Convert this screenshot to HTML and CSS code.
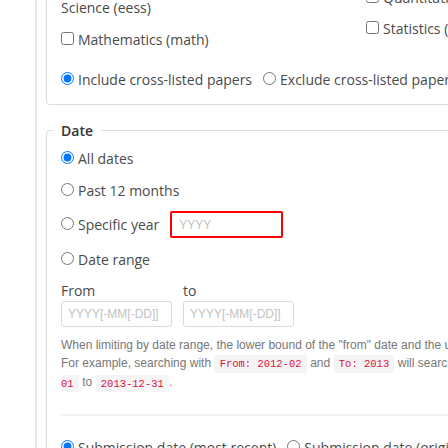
FILE: index.html
```html
<!DOCTYPE html>
<html lang="en">
<head>
<meta charset="utf-8">
<title>Advanced Search</title>
<link rel="stylesheet" href="styles.css">
</head>
<body>
<div class="page">
  <div class="panel">
    <fieldset class="box subject">
      <legend class="label">Subject</legend>
      <div class="subject-grid">
        <div class="col">
          <label class="check"><input type="checkbox">Computer Science (cs)</label>
          <label class="check"><input type="checkbox">Economics (econ)</label>
          <label class="check"><input type="checkbox">Electrical Engineering and Systems Science (eess)</label>
          <label class="check"><input type="checkbox">Mathematics (math)</label>
        </div>
        <div class="col">
          <div class="physics-row">
            <label class="check"><input type="checkbox">Physics</label>
            <select class="select"><option>all</option></select>
          </div>
          <label class="check"><input type="checkbox">Quantitative Biology (q-bio)</label>
          <label class="check"><input type="checkbox">Quantitative Finance (q-fin)</label>
          <label class="check"><input type="checkbox">Statistics (stat)</label>
        </div>
      </div>
      <div class="choice-row cross-row">
        <label class="choice"><input type="radio" name="cross" checked>Include cross-listed papers</label>
        <label class="choice"><input type="radio" name="cross">Exclude cross-listed papers</label>
      </div>
    </fieldset>

    <fieldset class="box date">
      <legend class="label">Date</legend>
      <div class="date-options">
        <label class="choice"><input type="radio" name="date" checked>All dates</label>
        <label class="choice"><input type="radio" name="date">Past 12 months</label>
        <div class="year-row">
          <label class="choice"><input type="radio" name="date">Specific year</label>
          <input class="input year" type="text" placeholder="YYYY">
        </div>
        <label class="choice"><input type="radio" name="date">Date range</label>
      </div>
      <div class="range">
        <div class="range-field">
          <label class="range-label">From</label>
          <input class="input range-input" type="text" placeholder="YYYY[-MM[-DD]]">
        </div>
        <div class="range-field">
          <label class="range-label">to</label>
          <input class="input range-input" type="text" placeholder="YYYY[-MM[-DD]]">
        </div>
      </div>
      <p class="help">When limiting by date range, the lower bound of the "from" date and the upper bound of the "to" date are used.<br>For example, searching with <code>From: 2012-02</code> and <code>To: 2013</code> will search for papers submitted from <code>2012-02-<br>01</code> to <code>2013-12-31</code>.</p>
      <hr class="divider">
      <div class="choice-row">
        <label class="choice"><input type="radio" name="datetype" checked>Submission date (most recent)</label>
        <label class="choice"><input type="radio" name="datetype">Submission date (original)</label>
        <label class="choice"><input type="radio" name="datetype">Announcement date</label>
      </div>
    </fieldset>
  </div>
</div>
</body>
</html>
```

FILE: styles.css
```css
html, body {
  margin: 0;
  padding: 0;
  overflow: hidden;
  background: #fff;
}

body {
  font-family: "Open Sans", "Noto Sans", sans-serif;
  font-size: 14px;
  font-weight: 400;
  line-height: 21px;
  color: #4a4a4a;
}

.page {
  width: 900px;
  margin-top: -114.6px;
}

.panel {
  margin-left: 35px;
  border-left: 2px solid #e8e8e8;
  padding: 0 20px 60px 9px;
}

.box {
  margin: 0;
  border: 1px solid #dbdbdb;
  border-radius: 4px;
  padding: 7px 14px 14px;
  min-width: 0;
}

.box + .box {
  margin-top: 15px;
}

.label {
  font-weight: 600;
  color: #363636;
  line-height: 21px;
  padding: 0 8px;
  margin-left: -8px;
}

.subject-grid {
  display: grid;
  grid-template-columns: 281px 1fr;
  column-gap: 24px;
}

.col {
  display: flex;
  flex-direction: column;
  gap: 10.5px;
}

.check,
.choice {
  display: block;
  white-space: normal;
}

input[type="checkbox"],
input[type="radio"] {
  width: 13px;
  height: 13px;
  margin: 0 4px 0 0;
  vertical-align: baseline;
}

.physics-row {
  display: flex;
  align-items: center;
  gap: 8px;
  height: 31.4px;
}

.select {
  height: 30px;
  font-family: inherit;
  font-size: 14px;
  border: 1px solid #dbdbdb;
  border-radius: 4px;
  background: #fff;
}

.choice-row {
  display: flex;
  gap: 11px;
  white-space: nowrap;
}

.choice-row .choice {
  white-space: nowrap;
}

.cross-row {
  margin-top: 19.2px;
}

.date-options {
  display: flex;
  flex-direction: column;
  gap: 10.5px;
}

.year-row {
  display: flex;
  align-items: center;
  gap: 11px;
}

.input {
  box-sizing: border-box;
  font-family: "Liberation Sans", Arial, sans-serif;
  font-size: 12px;
  color: #363636;
  border: 1px solid #dbdbdb;
  border-radius: 3px;
  background: #fff;
  outline: none;
  margin: 0;
}

.input::placeholder {
  color: #c2c2c2;
}

.year {
  width: 113px;
  height: 27px;
  border: 2px solid #ff0000;
  border-radius: 2px;
  padding: 0 6px 0 7px;
}

.range {
  display: grid;
  grid-template-columns: 111px 111px;
  column-gap: 11px;
  margin-top: 10.2px;
}

.range-field {
  display: flex;
  flex-direction: column;
}

.range-label {
  line-height: 21px;
}

.range-input {
  width: 111px;
  height: 26px;
  padding: 0 5px 0 6px;
}

.help {
  margin: 9px 0 0;
  font-family: "Liberation Sans", Arial, sans-serif;
  font-size: 12px;
  line-height: 18.3px;
  color: #777;
  white-space: nowrap;
}

.help code {
  font-family: "Liberation Mono", "Courier New", monospace;
  font-size: 10.5px;
  background: #f5f5f5;
  color: #da1039;
  padding: 0.25em 0.5em;
}

.divider {
  height: 2px;
  border: none;
  background: #f2f2f2;
  margin: 21.8px 0 20.3px;
}
```
